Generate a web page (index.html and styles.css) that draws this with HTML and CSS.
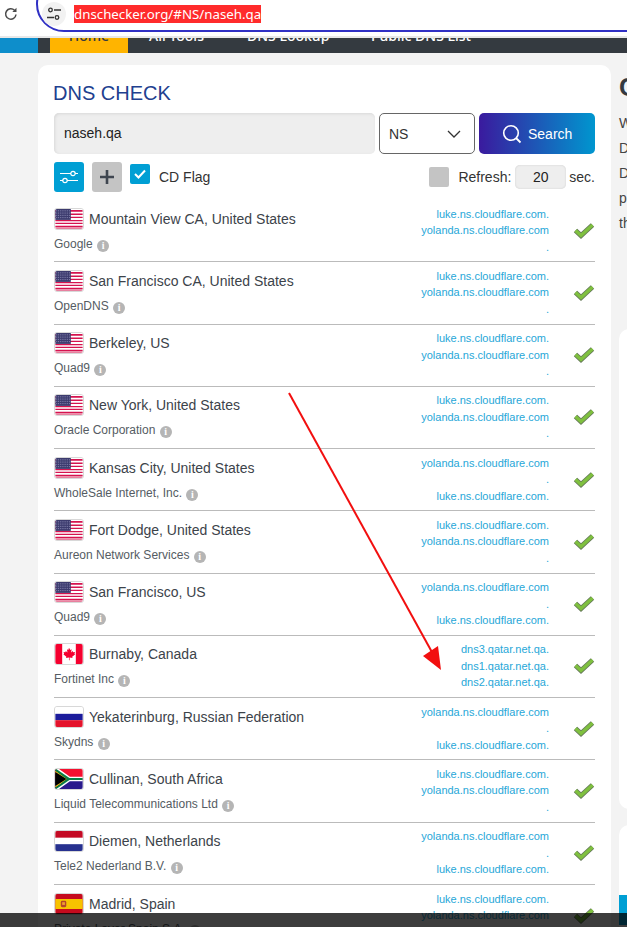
FILE: index.html
```html
<!DOCTYPE html>
<html lang="en">
<head>
    <meta charset="UTF-8">
    <title>DNS Check</title>
    <link rel="stylesheet" href="styles.css">
</head>
<body>
    <svg class="defs" width="0" height="0">
        <symbol id="flag-us" viewBox="0 0 30 22">
            <rect width="30" height="22" fill="#fff"/>
            <path d="M0 1h30v2H0zM0 5h30v1.500H0zM0 8.500h30V10H0zM0 12h30v1.500H0zM0 15h30v1.500H0zM0 18.500h30V20H0z" fill="#d5134f"/>
            <path d="M0 20h30v2H0z" fill="#e8809f"/>
            <rect width="17" height="12" fill="#3c3b6e"/>
            <path d="M1 2h15M1 4.500h15M1 7h15M1 9.500h15" stroke="#8f90b8" stroke-width="1" stroke-dasharray="1 1"/>
        </symbol>
        <symbol id="flag-ca" viewBox="0 0 30 22">
            <rect width="30" height="22" fill="#fff"/>
            <rect width="7.500" height="22" fill="#f5002f"/>
            <rect x="22.500" width="7.500" height="22" fill="#f5002f"/>
            <path d="M15 4l1.400 2.600 1.500-.7-.6 3.500 1.800-1.600.5 1.200 2-.3-.6 2.200.9.500-3.400 2.700.4 1.200-3.300-.4.100 3h-.8l.1-3-3.300.4.400-1.200-3.400-2.700.9-.5-.6-2.200 2 .3.500-1.200 1.800 1.600-.6-3.500 1.500.7z" fill="#f5002f"/>
        </symbol>
        <symbol id="flag-ru" viewBox="0 0 30 22">
            <rect width="30" height="7.500" fill="#fff"/>
            <rect y="7.500" width="30" height="7" fill="#1c1c9c"/>
            <rect y="14.500" width="30" height="7.500" fill="#e4132b"/>
        </symbol>
        <symbol id="flag-za" viewBox="0 0 30 22">
            <rect width="30" height="11" fill="#f5102f"/>
            <rect y="11" width="30" height="11" fill="#2a1a8c"/>
            <path d="M0 0l14 11L0 22" fill="#000"/>
            <path d="M0 0h4l12 8.500h14v5H16L4 22H0l14-11z" fill="#fff"/>
            <path d="M0 2.500L13.500 11 0 19.500" fill="none" stroke="#f7b818" stroke-width="1.500"/>
            <path d="M1 0l14.500 9.800H30v2.400H15.500L1 22h-1v-1.500L12.500 11 0 2V0z" fill="#0a7c45"/>
            <path d="M0 4.500L9 11l-9 6.500" fill="#000"/>
        </symbol>
        <symbol id="flag-nl" viewBox="0 0 30 22">
            <rect width="30" height="7.500" fill="#c40a24"/>
            <rect y="7.500" width="30" height="7" fill="#fff"/>
            <rect y="14.500" width="30" height="7.500" fill="#27318f"/>
        </symbol>
        <symbol id="flag-es" viewBox="0 0 30 22">
            <rect width="30" height="22" fill="#c60b1e"/>
            <rect y="5.500" width="30" height="11" fill="#f7c300"/>
            <rect x="6" y="7.500" width="6" height="7" rx="1.500" fill="#b5442b"/>
            <rect x="7.500" y="9" width="3" height="3" fill="#f0a030"/>
        </symbol>
        <symbol id="check" viewBox="0 0 22 18">
            <path d="M2.500 8.500l5.500 5L19.500 3" fill="none" stroke="#66795a" stroke-width="5"/>
            <path d="M2.500 8.500l5.500 5L19.500 3" fill="none" stroke="#7fc03f" stroke-width="3.200"/>
        </symbol>
    </svg>

    <div class="browser-bar">
        <svg class="reload" width="16" height="16" viewBox="0 0 16 16">
            <path d="M13 8.500A5.200 5.200 0 1 1 11.500 4.300" fill="none" stroke="#4a4a4a" stroke-width="1.500"/>
            <path d="M13.500 1.800v4.200H9.300z" fill="#4a4a4a"/>
        </svg>
        <div class="url-pill">
            <span class="site-icon">
                <svg width="16" height="16" viewBox="0 0 16 16">
                    <circle cx="4.500" cy="4" r="1.800" fill="none" stroke="#333" stroke-width="1.300"/>
                    <path d="M8 4h7M1 11.500h7" stroke="#333" stroke-width="1.300"/>
                    <circle cx="11" cy="11.500" r="1.800" fill="none" stroke="#333" stroke-width="1.300"/>
                </svg>
            </span>
            <span class="url-text">dnschecker.org/#NS/naseh.qa</span>
        </div>
    </div>

    <nav class="site-nav">
        <span class="nav-logo"></span>
        <span class="nav-item active">Home</span>
        <span class="nav-item tools">All Tools</span>
        <span class="nav-item lookup">DNS Lookup</span>
        <span class="nav-item">Public DNS List</span>
    </nav>

    <div class="page">
        <main class="card">
            <h1>DNS CHECK</h1>
            <div class="search-row">
                <div class="domain-input">naseh.qa</div>
                <div class="type-select">
                    <span>NS</span>
                    <svg width="14" height="8" viewBox="0 0 14 8"><path d="M1 1l6 6 6-6" fill="none" stroke="#333" stroke-width="1.300"/></svg>
                </div>
                <div class="search-btn">
                    <svg width="20" height="20" viewBox="0 0 20 20">
                        <circle cx="9" cy="9" r="7.300" fill="none" stroke="#fff" stroke-width="1.600"/>
                        <path d="M14 14l4.500 4.500" stroke="#fff" stroke-width="1.800"/>
                    </svg>
                    <span>Search</span>
                </div>
            </div>

            <div class="options-row">
                <span class="opt-btn blue">
                    <svg width="20" height="16" viewBox="0 0 20 16">
                        <path d="M1 4.500h11M16 4.500h3M1 11.500h3M8 11.500h11" stroke="#fff" stroke-width="1.200"/>
                        <circle cx="14" cy="4.500" r="2.200" fill="none" stroke="#fff" stroke-width="1.200"/>
                        <circle cx="6" cy="11.500" r="2.200" fill="none" stroke="#fff" stroke-width="1.200"/>
                    </svg>
                </span>
                <span class="opt-btn grey">
                    <svg width="14" height="14" viewBox="0 0 14 14"><path d="M7 0v14M0 7h14" stroke="#3f4650" stroke-width="2.600"/></svg>
                </span>
                <span class="check-box on">
                    <svg width="12" height="10" viewBox="0 0 12 10"><path d="M1 5l3.500 3.500L11 1.500" fill="none" stroke="#fff" stroke-width="2"/></svg>
                </span>
                <span class="cd-label">CD Flag</span>
                <span class="check-box refresh-box"></span>
                <span class="refresh-label">Refresh:</span>
                <span class="refresh-input">20</span>
                <span class="sec-label">sec.</span>
            </div>

            <div class="results">
                <div class="row">
                    <div class="where">
                        <div class="city"><svg class="flag"><use href="#flag-us"/></svg>Mountain View CA, United States</div>
                        <div class="provider">Google <i class="info">i</i></div>
                    </div>
                    <div class="records"><div>luke.ns.cloudflare.com.</div><div>yolanda.ns.cloudflare.com</div><div>.</div></div>
                    <svg class="ok"><use href="#check"/></svg>
                </div>
                <div class="row">
                    <div class="where">
                        <div class="city"><svg class="flag"><use href="#flag-us"/></svg>San Francisco CA, United States</div>
                        <div class="provider">OpenDNS <i class="info">i</i></div>
                    </div>
                    <div class="records"><div>luke.ns.cloudflare.com.</div><div>yolanda.ns.cloudflare.com</div><div>.</div></div>
                    <svg class="ok"><use href="#check"/></svg>
                </div>
                <div class="row">
                    <div class="where">
                        <div class="city"><svg class="flag"><use href="#flag-us"/></svg>Berkeley, US</div>
                        <div class="provider">Quad9 <i class="info">i</i></div>
                    </div>
                    <div class="records"><div>luke.ns.cloudflare.com.</div><div>yolanda.ns.cloudflare.com</div><div>.</div></div>
                    <svg class="ok"><use href="#check"/></svg>
                </div>
                <div class="row">
                    <div class="where">
                        <div class="city"><svg class="flag"><use href="#flag-us"/></svg>New York, United States</div>
                        <div class="provider">Oracle Corporation <i class="info">i</i></div>
                    </div>
                    <div class="records"><div>luke.ns.cloudflare.com.</div><div>yolanda.ns.cloudflare.com</div><div>.</div></div>
                    <svg class="ok"><use href="#check"/></svg>
                </div>
                <div class="row">
                    <div class="where">
                        <div class="city"><svg class="flag"><use href="#flag-us"/></svg>Kansas City, United States</div>
                        <div class="provider">WholeSale Internet, Inc. <i class="info">i</i></div>
                    </div>
                    <div class="records"><div>yolanda.ns.cloudflare.com</div><div>.</div><div>luke.ns.cloudflare.com.</div></div>
                    <svg class="ok"><use href="#check"/></svg>
                </div>
                <div class="row">
                    <div class="where">
                        <div class="city"><svg class="flag"><use href="#flag-us"/></svg>Fort Dodge, United States</div>
                        <div class="provider">Aureon Network Services <i class="info">i</i></div>
                    </div>
                    <div class="records"><div>luke.ns.cloudflare.com.</div><div>yolanda.ns.cloudflare.com</div><div>.</div></div>
                    <svg class="ok"><use href="#check"/></svg>
                </div>
                <div class="row">
                    <div class="where">
                        <div class="city"><svg class="flag"><use href="#flag-us"/></svg>San Francisco, US</div>
                        <div class="provider">Quad9 <i class="info">i</i></div>
                    </div>
                    <div class="records"><div>yolanda.ns.cloudflare.com</div><div>.</div><div>luke.ns.cloudflare.com.</div></div>
                    <svg class="ok"><use href="#check"/></svg>
                </div>
                <div class="row">
                    <div class="where">
                        <div class="city"><svg class="flag"><use href="#flag-ca"/></svg>Burnaby, Canada</div>
                        <div class="provider">Fortinet Inc <i class="info">i</i></div>
                    </div>
                    <div class="records"><div>dns3.qatar.net.qa.</div><div>dns1.qatar.net.qa.</div><div>dns2.qatar.net.qa.</div></div>
                    <svg class="ok"><use href="#check"/></svg>
                </div>
                <div class="row">
                    <div class="where">
                        <div class="city"><svg class="flag"><use href="#flag-ru"/></svg>Yekaterinburg, Russian Federation</div>
                        <div class="provider">Skydns <i class="info">i</i></div>
                    </div>
                    <div class="records"><div>yolanda.ns.cloudflare.com</div><div>.</div><div>luke.ns.cloudflare.com.</div></div>
                    <svg class="ok"><use href="#check"/></svg>
                </div>
                <div class="row">
                    <div class="where">
                        <div class="city"><svg class="flag"><use href="#flag-za"/></svg>Cullinan, South Africa</div>
                        <div class="provider">Liquid Telecommunications Ltd <i class="info">i</i></div>
                    </div>
                    <div class="records"><div>luke.ns.cloudflare.com.</div><div>yolanda.ns.cloudflare.com</div><div>.</div></div>
                    <svg class="ok"><use href="#check"/></svg>
                </div>
                <div class="row">
                    <div class="where">
                        <div class="city"><svg class="flag"><use href="#flag-nl"/></svg>Diemen, Netherlands</div>
                        <div class="provider">Tele2 Nederland B.V. <i class="info">i</i></div>
                    </div>
                    <div class="records"><div>yolanda.ns.cloudflare.com</div><div>.</div><div>luke.ns.cloudflare.com.</div></div>
                    <svg class="ok"><use href="#check"/></svg>
                </div>
                <div class="row">
                    <div class="where">
                        <div class="city"><svg class="flag"><use href="#flag-es"/></svg>Madrid, Spain</div>
                        <div class="provider">Private Layer Spain S.A. <i class="info">i</i></div>
                    </div>
                    <div class="records"><div>luke.ns.cloudflare.com.</div><div>yolanda.ns.cloudflare.com</div><div>.</div></div>
                    <svg class="ok"><use href="#check"/></svg>
                </div>
            </div>
        </main>

        <aside class="side">
            <h2>Check DNS</h2>
            <p>We</p>
            <p>DNS</p>
            <p>DNS</p>
            <p>propagation</p>
            <p>the</p>
            <div class="side-card tall"></div>
            <div class="side-card short"><div class="side-band"></div></div>
        </aside>
    </div>

    <!-- annotation drawn on the screenshot -->
    <svg class="arrow" width="627" height="927" viewBox="0 0 627 927">
        <path d="M289 393L433 654" stroke="#f20f0f" stroke-width="2"/>
        <path d="M441 670L423 656 438 646z" fill="#f20f0f"/>
    </svg>
    <div class="dock"></div>
</body>
</html>
```
FILE: styles.css
```css
html, body {
    margin: 0;
    height: 927px;
    overflow: hidden;
}
body {
    position: relative;
    background: #f3f3f3;
    font-family: "Liberation Sans", Arial, sans-serif;
    color: #3c434a;
}
.defs {
    position: absolute;
}

/* browser chrome */
.browser-bar {
    display: flex;
    height: 36px;
    background: #fff;
    border-bottom: 2px solid #e8e8e8;
    overflow: hidden;
}
.reload {
    margin: 6px 0 0 3px;
}
.url-pill {
    display: flex;
    align-items: flex-start;
    flex: 1;
    box-sizing: border-box;
    height: 56px;
    margin: -24px -40px 0 17px;
    padding: 24px 0 0 4px;
    border: 2px solid #3030c4;
    border-radius: 28px;
}
.site-icon {
    display: flex;
    align-items: center;
    justify-content: center;
    width: 24px;
    height: 24px;
    margin-right: 8px;
    background: #f2f2f2;
    border-radius: 50%;
}
.url-text {
    margin-top: 3px;
    background: #ff2b2b;
    color: #fff;
    font-family: "Noto Sans", sans-serif;
    font-size: 13.300px;
    line-height: 18px;
    white-space: nowrap;
}

/* site nav, mostly scrolled out of view */
.site-nav {
    display: flex;
    height: 15px;
    overflow: hidden;
    background: #343a40;
    color: #fff;
    font-family: "Noto Sans", sans-serif;
    font-size: 14px;
    font-weight: 500;
    line-height: 6px;
}
.nav-logo {
    width: 38px;
    background: #0e8ecb;
}
.nav-item {
    height: 20px;
    margin-top: -5px;
    white-space: nowrap;
}
.nav-item.active {
    width: 78px;
    margin: -5px 21px 0 12px;
    background: #ffb400;
    color: #343a40;
    text-align: center;
}
.nav-item.tools {
    width: 98px;
}
.nav-item.lookup {
    width: 124px;
}

.page {
    display: flex;
    gap: 8px;
    padding: 12px 0 0 38px;
}
.card {
    flex: 0 0 541px;
    height: 900px;
    padding: 16px;
    background: #fff;
    border-radius: 10px;
}
h1 {
    margin: 0 0 8px -1px;
    color: #21408f;
    font-size: 20px;
    font-weight: 400;
    line-height: 24px;
}

.search-row {
    display: flex;
    gap: 4px;
    height: 41px;
}
.domain-input {
    flex: 1;
    padding-left: 10px;
    background: #eee;
    border-radius: 5px;
    box-shadow: inset 1px 1px 3px #d8d8d8;
    color: #222;
    font-size: 14px;
    line-height: 41px;
}
.type-select {
    display: flex;
    align-items: center;
    justify-content: space-between;
    box-sizing: border-box;
    width: 96px;
    padding: 0 13px 0 9px;
    border: 1px solid #666;
    border-radius: 5px;
    color: #333;
    font-size: 14px;
}
.search-btn {
    display: flex;
    align-items: center;
    gap: 6px;
    box-sizing: border-box;
    width: 116px;
    padding-left: 23px;
    background: linear-gradient(90deg, #3a1a9e, #0096cf);
    border-radius: 5px;
    color: #fff;
    font-size: 14px;
}

.options-row {
    display: flex;
    align-items: center;
    height: 30px;
    margin-top: 8px;
    color: #333;
    font-size: 14px;
}
.opt-btn {
    display: flex;
    align-items: center;
    justify-content: center;
    width: 30px;
    height: 30px;
    margin-right: 8px;
    border-radius: 3px;
}
.opt-btn.blue {
    background: #009fd4;
}
.opt-btn.grey {
    background: #c4c4c4;
}
.check-box {
    display: flex;
    align-items: center;
    justify-content: center;
    width: 20px;
    height: 20px;
    border-radius: 2px;
    background: #c4c4c4;
}
.check-box.on {
    margin-top: -6px;
    background: #009fd4;
}
.cd-label {
    margin-left: 9px;
}
.refresh-box {
    margin-left: auto;
}
.refresh-label {
    margin-left: 9px;
}
.refresh-input {
    width: 51px;
    height: 24px;
    margin: 0 3px 0 4px;
    background: #eee;
    border-radius: 5px;
    box-shadow: inset 0 0 2px #ccc;
    color: #222;
    line-height: 24px;
    text-align: center;
}

/* results list */
.results {
    margin-top: 8px;
}
.row {
    display: flex;
    box-sizing: border-box;
    height: 62.280px;
    padding-top: 5.600px;
    border-bottom: 1px solid #bbb;
}
.where {
    flex: 1;
    white-space: nowrap;
}
.city {
    display: flex;
    align-items: center;
    gap: 5px;
    height: 26px;
    font-size: 14px;
}
.flag {
    width: 30px;
    height: 22px;
    box-sizing: border-box;
    border: 1px solid #d8d8d8;
    border-radius: 3px;
}
.provider {
    margin-top: 3px;
    color: #555c63;
    font-size: 12px;
    line-height: 18px;
}
.info {
    display: inline-block;
    width: 12px;
    height: 12px;
    margin-left: 1px;
    background: #b5b5b5;
    border-radius: 50%;
    color: #fff;
    font-family: "Liberation Serif", serif;
    font-size: 10px;
    font-style: normal;
    font-weight: 700;
    line-height: 12px;
    text-align: center;
    vertical-align: -1px;
}
.records {
    color: #27a7d8;
    font-size: 11px;
    line-height: 16.500px;
    text-align: right;
    white-space: nowrap;
}
.ok {
    width: 22px;
    height: 18px;
    margin: 16px 0 0 24px;
}

/* right column */
.side {
    flex: 0 0 300px;
    white-space: nowrap;
}
h2 {
    margin: 0 0 2px;
    color: #343a40;
    font-size: 26px;
    line-height: 44px;
}
.side p {
    margin: 0;
    color: #444;
    font-size: 14px;
    line-height: 25px;
}
.side-card {
    background: #fff;
    border-radius: 10px;
}
.side-card.tall {
    height: 480px;
    margin-top: 93px;
}
.side-card.short {
    height: 120px;
    margin-top: 16px;
    padding-top: 70px;
}
.side-band {
    height: 30px;
    background: #009fd4;
}

/* overlays */
.arrow {
    position: absolute;
    top: 0;
    left: 0;
    pointer-events: none;
}
.dock {
    position: absolute;
    left: 0;
    right: 0;
    bottom: 0;
    height: 14px;
    background: rgba(0, 0, 0, 0.76);
}
```
